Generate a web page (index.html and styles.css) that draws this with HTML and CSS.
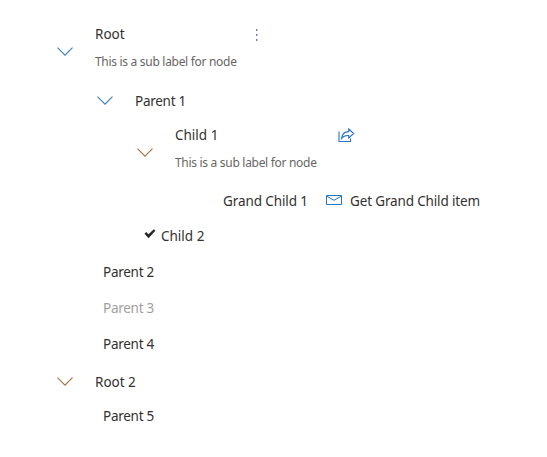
FILE: index.html
```
<!DOCTYPE html>
<html lang="en">
<head>
<meta charset="utf-8">
<title>Tree view</title>
<link rel="stylesheet" href="styles.css">
</head>
<body>
<svg width="0" height="0" class="defs"><symbol id="chev" viewBox="0 0 16 9"><path d="M.5.7 8 8.2 15.5.7" fill="none" stroke="currentColor" stroke-width="1.15"/></symbol></svg>
<ul class="tree">
  <li>
    <div class="row tall">
      <svg class="chev blue"><use href="#chev"/></svg>
      <div class="text"><span class="label root">Root</span><span class="sub">This is a sub label for node</span></div>
      <svg class="more" width="3" height="12" viewBox="0 0 3 12"><path d="M1 1h1.4M1 6h1.4M1 11h1.4" stroke="#3d50a5" stroke-width="1.6"/></svg>
    </div>
    <ul>
      <li>
        <div class="row parent"><svg class="chev blue"><use href="#chev"/></svg><span class="label tight">Parent 1</span></div>
        <ul>
          <li>
            <div class="row tall child">
              <svg class="chev brown"><use href="#chev"/></svg>
              <div class="text"><span class="label child-label">Child 1</span><span class="sub">This is a sub label for node</span></div>
              <svg class="share" width="17" height="15" viewBox="0 0 17 15" fill="none" stroke="#2b74c4" stroke-width="1.1"><path d="M1 3.5v10h11.5v-3"/><path d="M10.7 1 15.7 5.5 10.7 10V7.5C7.3 7.2 5.2 8.2 3.5 10.5 3.9 6.2 6.5 3.8 10.7 3.6Z"/></svg>
            </div>
            <ul>
              <li class="row grand">
                <span class="label grand-label">Grand Child 1</span>
                <svg class="mail" width="17" height="11" viewBox="0 0 17 11" fill="none" stroke="#2475c4"><path d="M.5.5h15v9H.5Z"/><path d="m1 1.3 7 4L15 1.3"/></svg>
                <span class="label action">Get Grand Child item</span>
              </li>
            </ul>
          </li>
          <li class="row checked"><svg class="check" width="12" height="10" viewBox="0 0 12 10"><path d="m.5 4.7 1.8-1.6 2.2 2.2L9.8.3l1.6 1.5-6.9 7.5Z" fill="#292827"/></svg><span class="label child-label">Child 2</span></li>
        </ul>
      </li>
      <li class="row leaf"><span class="label tight">Parent 2</span></li>
      <li class="row leaf disabled"><span class="label tight">Parent 3</span></li>
      <li class="row leaf"><span class="label tight">Parent 4</span></li>
    </ul>
  </li>
  <li>
    <div class="row root-two"><svg class="chev brown"><use href="#chev"/></svg><span class="label root-label">Root 2</span></div>
    <ul><li class="row leaf last"><span class="label tight">Parent 5</span></li></ul>
  </li>
</ul>
</body>
</html>
```
FILE: styles.css
```
body { margin: 0; background: #fff; color: #323130; font: 13.5px/28px "Noto Sans", sans-serif; }
.defs { display: block; }
ul { list-style: none; margin: 0; padding: 0; }
.tree { padding: 20px 0 0 57px; }
.tree ul { padding-left: 40px; }
.row { display: flex; align-items: center; height: 36px; white-space: nowrap; }
.tall { height: 64px; align-items: flex-start; }
.text { display: flex; flex-direction: column; width: 142px; }
.label { flex: none; }
.tight { letter-spacing: -0.27px; }
.sub { font-size: 12px; letter-spacing: -0.3px; color: #686664; }
.chev { flex: none; width: 16px; height: 9px; margin: -2px 22px 0 0; }
.tall .chev { margin-top: 27px; }
.blue { color: #3b80b8; }
.brown { color: #a47442; }
.more { margin: 9px 0 0 18px; }
.parent { height: 34px; }
.child { margin-top: 3px; height: 62px; }
.share { margin: 7px 0 0 21px; }
.tree .grand { height: 35px; padding-left: 46px; }
.grand-label { width: 85px; letter-spacing: -0.1px; }
.mail { margin-left: 18px; }
.action { margin-left: 7px; letter-spacing: -0.15px; }
.checked { padding-left: 7px; }
.check { margin: -4px 5px 0 0; }
.leaf { padding-left: 6px; }
.disabled { color: #a19f9d; }
.root-two { height: 40px; }
.last { height: 28px; }
```
